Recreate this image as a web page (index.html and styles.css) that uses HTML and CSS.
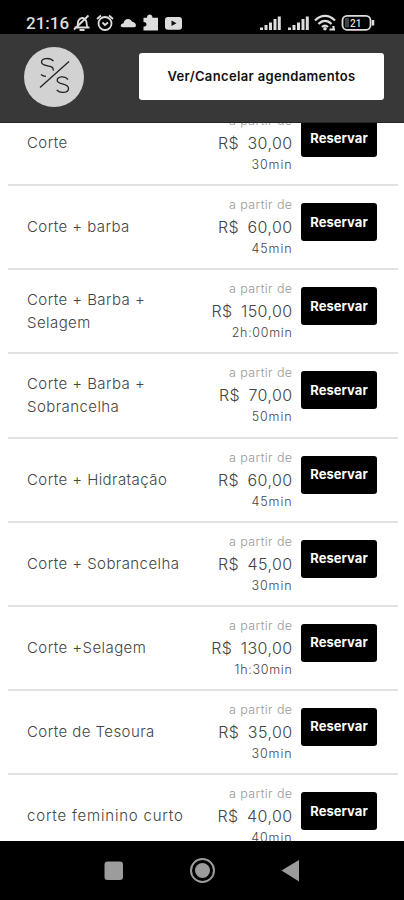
FILE: index.html
```
<!DOCTYPE html>
<html lang="pt-BR">
<head>
<meta charset="utf-8">
<title>Agendamentos</title>
<link rel="stylesheet" href="styles.css">
</head>
<body>
<div class="status">
  <span class="clock">21:16</span>
  <svg class="status-left" width="112" height="20" viewBox="0 0 112 20" fill="none" stroke="#ddd" stroke-width="1.800">
    <path d="M3.500 14.500h15M6 14.500c1-2 .5-5 1.500-7 2-3.500 6-3.200 7.500 0 1 2 .3 5 1.500 7M3 16.500 17.500 2.500"/>
    <path d="M8.500 17h5" stroke-width="2"/>
    <circle cx="34" cy="10.500" r="6.500"/><path d="M31.500 9.500 34 12l3-2.500M26 6l4-3.500M42 6l-4-3.500"/>
    <path d="M52 14.200c-3.500 0-2.500-4 .5-4 1-5.200 7-5.200 8.500-1.500 4 .2 5.500 5.500 2 5.500z" fill="#ddd" stroke="none"/>
    <path d="M72.500 4.800H76c0-4.300 5.500-4.300 5.500 0H87V17.500H72.500v-3.800c4 0 4-4.700 0-4.700z" fill="#ddd" stroke="none"/>
    <rect x="94" y="4" width="17" height="12.800" rx="3" fill="#ddd" stroke="none"/><path d="m100.500 7.500 5 2.800-5 2.800z" fill="#111" stroke="none"/>
  </svg>
  <svg class="status-right" width="120" height="20" viewBox="0 0 120 20" fill="none" stroke="#ddd">
    <g stroke-width="3"><path d="M3.500 17v-2.500M8 17v-5M12.500 17V9.500M17 17V6M21.300 17V3.500"/><path d="M31.500 17v-2.500M36 17v-5M40.500 17V9.500M45 17V6M49.300 17V3.500"/></g>
    <path d="M57 7.500c6-6.200 14-6.200 20 0M60.500 11c4-4.200 9-4.200 13 0M64 14c2-2 4-2 6 0" stroke-width="2.200"/><circle cx="67" cy="15.800" r="1.800" fill="#ddd" stroke="none"/><path d="M71.500 16.500h5.500M75.500 17v-4" stroke-width="2.200"/>
    <rect x="84.500" y="2.800" width="28" height="14" rx="4.500" stroke-width="1.800"/><path d="M115 7v5.500" stroke-width="2.500"/><path d="M87 5h4v9.500h-4z" fill="#444" stroke="none"/>
    <text class="battery" x="92" y="13.500">21</text>
  </svg>
</div>
<header class="top">
  <svg class="logo" width="62" height="62" viewBox="0 0 62 62">
    <circle cx="31" cy="31" r="30" fill="#d2d2d2"/>
    <g fill="none" stroke="#222" stroke-width="1.300"><path d="M17 41.500 46 15.500"/><path d="M30.500 15.200C27.500 11.500 18.500 11.500 18.500 16c0 4 6.500 3.300 9.500 4.600 2 .9 2.500 2 2.300 4M18 28.500c1.300 1.200 3 1.800 5 1.800"/><path d="M45 33.500c-3-4-10.800-3.500-10.800 1 0 4.300 11.300 2.500 11.300 7.700 0 5.300-8.500 5.300-11.800 1.800"/></g>
  </svg>
  <button class="view">Ver/Cancelar agendamentos</button>
</header>
<main class="list">
  <div class="row"><div class="name">Corte</div><div class="price"><span class="from">a partir de</span><span class="amount"><span>R$</span><span>30,00</span></span><span class="time">30min</span></div><button class="book">Reservar</button></div>
  <div class="row"><div class="name">Corte + barba</div><div class="price"><span class="from">a partir de</span><span class="amount"><span>R$</span><span>60,00</span></span><span class="time">45min</span></div><button class="book">Reservar</button></div>
  <div class="row"><div class="name">Corte + Barba +<br>Selagem</div><div class="price"><span class="from">a partir de</span><span class="amount"><span>R$</span><span>150,00</span></span><span class="time long">2h:00min</span></div><button class="book">Reservar</button></div>
  <div class="row"><div class="name">Corte + Barba +<br>Sobrancelha</div><div class="price"><span class="from">a partir de</span><span class="amount"><span>R$</span><span>70,00</span></span><span class="time">50min</span></div><button class="book">Reservar</button></div>
  <div class="row"><div class="name">Corte + Hidratação</div><div class="price"><span class="from">a partir de</span><span class="amount"><span>R$</span><span>60,00</span></span><span class="time">45min</span></div><button class="book">Reservar</button></div>
  <div class="row"><div class="name">Corte + Sobrancelha</div><div class="price"><span class="from">a partir de</span><span class="amount"><span>R$</span><span>45,00</span></span><span class="time">30min</span></div><button class="book">Reservar</button></div>
  <div class="row"><div class="name">Corte +Selagem</div><div class="price"><span class="from">a partir de</span><span class="amount"><span>R$</span><span>130,00</span></span><span class="time long">1h:30min</span></div><button class="book">Reservar</button></div>
  <div class="row"><div class="name">Corte de Tesoura</div><div class="price"><span class="from">a partir de</span><span class="amount"><span>R$</span><span>35,00</span></span><span class="time">30min</span></div><button class="book">Reservar</button></div>
  <div class="row"><div class="name wide">corte feminino curto</div><div class="price"><span class="from">a partir de</span><span class="amount"><span>R$</span><span>40,00</span></span><span class="time">40min</span></div><button class="book">Reservar</button></div>
</main>
<nav class="nav">
  <svg width="404" height="59" viewBox="0 0 404 59">
    <rect x="104.500" y="20.500" width="18.500" height="18.500" rx="3" fill="#9c9c9c"/>
    <circle cx="202.500" cy="29.500" r="11.500" fill="none" stroke="#9c9c9c" stroke-width="2"/><circle cx="202.500" cy="29.500" r="7.500" fill="#9c9c9c"/>
    <path d="M281.500 29.500 299 19v21.500z" fill="#9c9c9c"/>
  </svg>
</nav>
</body>
</html>
```
FILE: styles.css
```
* { box-sizing: border-box; }
body {
  margin: 0;
  width: 404px;
  height: 900px;
  overflow: hidden;
  display: flex;
  flex-direction: column;
  background: #fff;
  font-family: Inter, "Open Sans", sans-serif;
}
button { border: 0; padding: 0; font-family: inherit; color: inherit; }
.status {
  flex: 0 0 34px;
  display: flex;
  padding: 13px 26px 0;
  background: #000;
  color: #ddd;
}
.clock {
  width: 45px;
  font: 500 17px/20px Roboto, sans-serif;
}
.status-right { margin-left: auto; }
.status-left, .status-right { flex: none; }
.battery { font: 500 10px Roboto, sans-serif; fill: #ddd; stroke: none; }
.top {
  flex: 0 0 89px;
  display: flex;
  align-items: flex-start;
  justify-content: space-between;
  padding: 12px 20px 0 23px;
  background: #383838;
  border-bottom: 1px solid #252525;
}
.view {
  width: 245px;
  height: 47px;
  margin-top: 7px;
  border-radius: 3px;
  padding-bottom: 1px;
  background: #fff;
  color: #111;
  font-size: 13px;
  font-weight: 600;
  letter-spacing: 0.35px;
}
.list {
  flex: 0 0 718px;
  overflow: hidden;
  padding: 0 6px 0 8px;
}
.row {
  display: flex;
  height: 84.150px;
  padding: 0 21px 0 19px;
  border-bottom: 2px solid #e2e2e2;
}
.row:first-child { margin-top: -21px; }
.name {
  flex: 1;
  align-self: center;
  padding-bottom: 1px;
  font-size: 15px;
  line-height: 23px;
  font-weight: 300;
  letter-spacing: 0.43px;
  color: #444;
  white-space: nowrap;
}
.wide { letter-spacing: 0.8px; }
.price {
  display: flex;
  flex-direction: column;
  align-items: flex-end;
  padding-top: 8px;
  margin-right: 8.500px;
  line-height: 22px;
  font-weight: 300;
  color: #444;
}
.from { font-size: 12.500px; letter-spacing: 0.4px; color: #999; }
.amount { display: flex; gap: 8.500px; font-size: 16px; letter-spacing: 0.4px; }
.time { font-size: 12.500px; letter-spacing: 0.9px; }
.long { letter-spacing: 0.7px; }
.book {
  width: 76px;
  height: 38px;
  margin-top: 17px;
  padding-bottom: 1px;
  border-radius: 3px;
  background: #000;
  color: #fff;
  font-size: 13px;
  font-weight: 700;
  letter-spacing: 0.05px;
}
.nav { flex: 0 0 59px; background: #000; }
.nav svg { display: block; }
```
